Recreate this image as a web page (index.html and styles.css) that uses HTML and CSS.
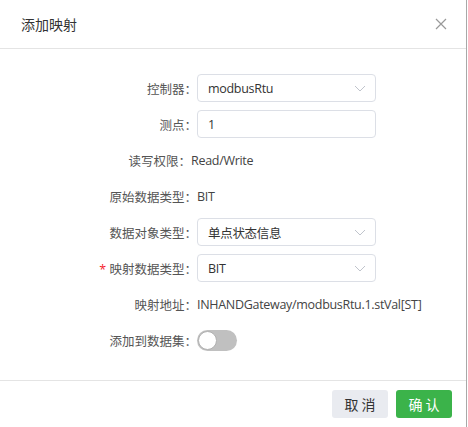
FILE: index.html
```html
<!DOCTYPE html>
<html lang="zh-CN">
<head>
    <meta charset="UTF-8">
    <meta name="viewport" content="width=device-width, initial-scale=1.0">
    <title>添加映射</title>
    <link rel="stylesheet" href="styles.css">
</head>
<body>
    <div class="dialog">
        <div class="dialog-header">
            <span class="dialog-title">添加映射</span>
            <span class="close">
                <svg width="12" height="12" viewBox="0 0 12 12"><path d="M1 1L11 11M11 1L1 11" stroke="#999" stroke-width="1.2" fill="none"/></svg>
            </span>
        </div>
        <div class="dialog-body">
            <div class="form-row">
                <label class="label">控制器：</label>
                <div class="select">
                    <span>modbusRtu</span>
                    <svg class="arrow" width="12" height="7" viewBox="0 0 12 7"><path d="M1 1L6 6L11 1" stroke="#c0c4cc" stroke-width="1" fill="none"/></svg>
                </div>
            </div>
            <div class="form-row">
                <label class="label">测点：</label>
                <div class="input">1</div>
            </div>
            <div class="form-row">
                <label class="label label-short">读写权限：</label>
                <div class="text">Read/Write</div>
            </div>
            <div class="form-row">
                <label class="label">原始数据类型：</label>
                <div class="text">BIT</div>
            </div>
            <div class="form-row">
                <label class="label">数据对象类型：</label>
                <div class="select">
                    <span>单点状态信息</span>
                    <svg class="arrow" width="12" height="7" viewBox="0 0 12 7"><path d="M1 1L6 6L11 1" stroke="#c0c4cc" stroke-width="1" fill="none"/></svg>
                </div>
            </div>
            <div class="form-row">
                <label class="label"><span class="required">*</span> 映射数据类型：</label>
                <div class="select">
                    <span>BIT</span>
                    <svg class="arrow" width="12" height="7" viewBox="0 0 12 7"><path d="M1 1L6 6L11 1" stroke="#c0c4cc" stroke-width="1" fill="none"/></svg>
                </div>
            </div>
            <div class="form-row">
                <label class="label">映射地址：</label>
                <div class="text">INHANDGateway/modbusRtu.1.stVal[ST]</div>
            </div>
            <div class="form-row">
                <label class="label">添加到数据集：</label>
                <div class="switch"><span class="knob"></span></div>
            </div>
        </div>
        <div class="dialog-footer">
            <button class="btn btn-cancel">取 消</button>
            <button class="btn btn-ok">确 认</button>
        </div>
    </div>
</body>
</html>
```

FILE: styles.css
```css
body {
    margin: 0;
    background-color: white;
    font-family: 'Open Sans', 'Noto Sans CJK SC', sans-serif;
    color: #333;
}
.dialog {
    width: 466px;
    height: 427px;
    border-right: 1px solid #a8a8a8;
    background-color: white;
}
.dialog-header {
    height: 48px;
    border-bottom: 1px solid #e4e4e4;
    display: flex;
    align-items: center;
    justify-content: space-between;
    padding: 0 19px 0 21px;
}
.dialog-title {
    font-size: 14px;
    color: #333;
}
.close {
    display: flex;
    width: 12px;
    height: 12px;
}
.dialog-body {
    padding: 25px 0 18px 0;
}
.form-row {
    display: flex;
    align-items: center;
    height: 28px;
    margin-bottom: 8px;
}
.label {
    width: 197px;
    flex-shrink: 0;
    text-align: right;
    font-size: 12.5px;
    color: #555;
}
.label-short {
    width: 191px;
}
.required {
    color: #f5222d;
}
.select, .input {
    width: 179px;
    height: 28px;
    box-sizing: border-box;
    border: 1px solid #dcdfe6;
    border-radius: 4px;
    display: flex;
    align-items: center;
    justify-content: space-between;
    padding: 0 9px 0 10px;
    font-size: 12.5px;
    letter-spacing: -0.3px;
    color: #333;
}
.text {
    font-size: 12.5px;
    letter-spacing: -0.3px;
    color: #444;
}
.switch {
    width: 40px;
    height: 21px;
    border-radius: 11px;
    background-color: #c0c0c0;
    position: relative;
}
.knob {
    position: absolute;
    left: 1px;
    top: 1px;
    width: 17px;
    height: 17px;
    border-radius: 50%;
    background-color: white;
    border: 1px solid #b0b0b0;
}
.dialog-footer {
    border-top: 1px solid #e4e4e4;
    display: flex;
    justify-content: flex-end;
    gap: 8px;
    padding: 9px 14px 0 0;
}
.btn {
    width: 56px;
    height: 28px;
    border: none;
    border-radius: 3px;
    font-family: 'Noto Sans CJK SC', sans-serif;
    font-size: 14px;
    cursor: pointer;
}
.btn-cancel {
    background-color: #e9ebf0;
    color: #333;
}
.btn-ok {
    background-color: #3bb34a;
    color: white;
}
```
